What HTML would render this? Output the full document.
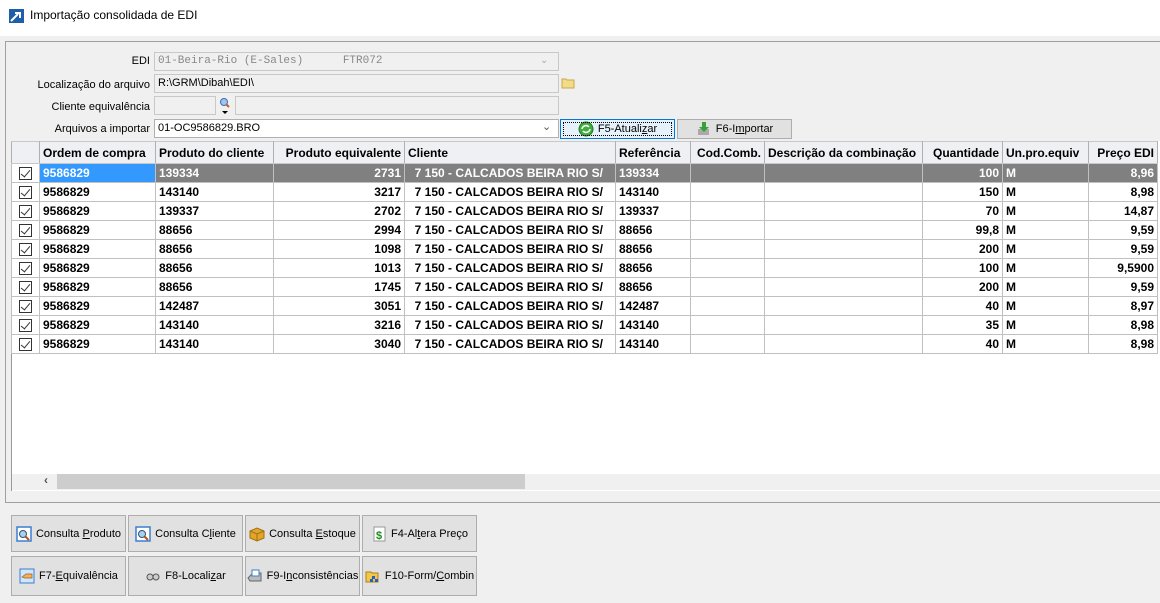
<!DOCTYPE html>
<html><head><meta charset="utf-8"><style>
*{box-sizing:border-box;margin:0;padding:0}
body{width:1160px;height:603px;background:#f0f0f0;font-family:"Liberation Sans",Tahoma,sans-serif;font-size:12px;color:#000;position:relative;overflow:hidden}
.abs{position:absolute}
.title{left:0;top:0;width:1160px;height:36px;background:#fff}
.lbl{text-align:right;width:150px;left:0;font-size:11px}
.fld{border:1px solid #c8c8c8;background:#f0f0f0;height:19px;font-size:11px;padding:2px 3px;white-space:pre}
table{border-collapse:collapse;table-layout:fixed;position:absolute;left:11px;top:141px;width:1146px}
td,th{height:19px;border:1px solid #c0c0c0;font-weight:bold;font-size:12px;padding:0 3px;white-space:nowrap;overflow:hidden}
th{height:22px;background:#eef0f3;text-align:left;border-color:#c8c8c8 #b0b0b0}
.r{text-align:right}
tr.sel td{background:#808080;color:#fff}
tr.sel td.h{background:#3399ff}
td.cb{background:#fff!important;padding:0;text-align:center}
.box{display:inline-block;width:13px;height:13px;border:1px solid #333;vertical-align:middle;position:relative;background:#fff}
.box:after{content:"";position:absolute;left:3px;top:0px;width:4px;height:8px;border:solid #333;border-width:0 1.5px 1.5px 0;transform:rotate(40deg)}
.btn{background:#e1e1e1;border:1px solid #adadad;font-size:11px;display:flex;align-items:center;justify-content:center;white-space:nowrap}
.btn svg{margin-right:4px}
.ic{display:inline-block;width:16px;height:16px}
</style></head><body>
<div class="abs title"></div>
<svg class="abs" style="left:9px;top:9px" width="15" height="14"><rect width="15" height="14" fill="#1d5fa8"/><path d="M2 12 L9 5 M6 4 H11 V9" stroke="#fff" stroke-width="2" fill="none"/></svg>
<div class="abs" style="left:30px;top:8px;font-size:12px">Importação consolidada de EDI</div>
<div class="abs" style="left:5px;top:41px;width:1160px;height:462px;border:1px solid #a0a0a0;border-right:none"></div>

<div class="abs lbl" style="top:55px">EDI</div>
<div class="abs fld" style="left:154px;top:52px;width:405px;font-family:'Liberation Mono',monospace;color:#888;font-size:11px">01-Beira-Rio (E-Sales)      FTR072</div>
<div class="abs" style="left:540px;top:55px;color:#aaa;font-size:10px">&#8964;</div>
<div class="abs lbl" style="top:79px">Localização do arquivo</div>
<div class="abs fld" style="left:154px;top:74px;width:405px">R:\GRM\Dibah\EDI\</div>
<svg class="abs" style="left:561px;top:76px" width="14" height="13"><path d="M1 3 H5 L6 4 H13 V12 H1Z" fill="#f2dc8a" stroke="#c9a94a"/></svg>
<div class="abs lbl" style="top:101px">Cliente equivalência</div>
<div class="abs fld" style="left:154px;top:96px;width:62px"></div>
<svg class="abs" style="left:219px;top:97px" width="12" height="18"><circle cx="5" cy="5" r="3.5" fill="#9cc8f0" stroke="#3a6fb0"/><path d="M7 7 L10 10" stroke="#c06030" stroke-width="2"/><path d="M3 14 H9 L6 17Z" fill="#000"/></svg>
<div class="abs fld" style="left:235px;top:96px;width:324px"></div>
<div class="abs lbl" style="top:123px">Arquivos a importar</div>
<div class="abs fld" style="left:154px;top:119px;width:405px;background:#fff;border-color:#b0b0b0">01-OC9586829.BRO</div>
<div class="abs" style="left:542px;top:120px;color:#555;font-size:11px">&#8964;</div>
<div class="abs btn" style="left:560px;top:119px;width:115px;height:20px;border:1px solid #0078d7;background:#e5f1fb;outline:1px dotted #000;outline-offset:-4px"><svg class="ic" viewBox="0 0 16 16"><circle cx="8" cy="8" r="7" fill="#3fae3f" stroke="#1e7a1e"/><path d="M4 8a4 4 0 0 1 7-2M12 8a4 4 0 0 1-7 2" stroke="#fff" stroke-width="1.5" fill="none"/></svg><span>F5-Atuali<u>z</u>ar</span></div>
<div class="abs btn" style="left:677px;top:119px;width:115px;height:20px"><svg class="ic" viewBox="0 0 16 16"><rect x="2" y="8" width="11" height="6" fill="#aaa"/><path d="M6 1 H10 V6 H13 L8 11 L3 6 H6Z" fill="#3aa13a"/></svg><span>F6-I<u>m</u>portar</span></div>

<div class="abs" style="left:11px;top:141px;width:1149px;height:350px;background:#fff;border-left:1px solid #999"></div>
<table>
<colgroup><col style="width:28px"><col style="width:116px"><col style="width:118px"><col style="width:131px"><col style="width:211px"><col style="width:75px"><col style="width:74px"><col style="width:158px"><col style="width:80px"><col style="width:86px"><col style="width:69px"></colgroup>
<tr><th></th><th>Ordem de compra</th><th>Produto do cliente</th><th class="r">Produto equivalente</th><th>Cliente</th><th>Referência</th><th class="r">Cod.Comb.</th><th>Descrição da combinação</th><th class="r">Quantidade</th><th>Un.pro.equiv</th><th class="r">Preço EDI</th></tr>
<tr class="sel"><td class="cb"><span class="box"></span></td><td class="h">9586829</td><td>139334</td><td class="r">2731</td><td>&nbsp;&nbsp;7 150 - CALCADOS BEIRA RIO S/</td><td>139334</td><td></td><td></td><td class="r">100</td><td>M</td><td class="r">8,96</td></tr>
<tr><td class="cb"><span class="box"></span></td><td>9586829</td><td>143140</td><td class="r">3217</td><td>&nbsp;&nbsp;7 150 - CALCADOS BEIRA RIO S/</td><td>143140</td><td></td><td></td><td class="r">150</td><td>M</td><td class="r">8,98</td></tr>
<tr><td class="cb"><span class="box"></span></td><td>9586829</td><td>139337</td><td class="r">2702</td><td>&nbsp;&nbsp;7 150 - CALCADOS BEIRA RIO S/</td><td>139337</td><td></td><td></td><td class="r">70</td><td>M</td><td class="r">14,87</td></tr>
<tr><td class="cb"><span class="box"></span></td><td>9586829</td><td>88656</td><td class="r">2994</td><td>&nbsp;&nbsp;7 150 - CALCADOS BEIRA RIO S/</td><td>88656</td><td></td><td></td><td class="r">99,8</td><td>M</td><td class="r">9,59</td></tr>
<tr><td class="cb"><span class="box"></span></td><td>9586829</td><td>88656</td><td class="r">1098</td><td>&nbsp;&nbsp;7 150 - CALCADOS BEIRA RIO S/</td><td>88656</td><td></td><td></td><td class="r">200</td><td>M</td><td class="r">9,59</td></tr>
<tr><td class="cb"><span class="box"></span></td><td>9586829</td><td>88656</td><td class="r">1013</td><td>&nbsp;&nbsp;7 150 - CALCADOS BEIRA RIO S/</td><td>88656</td><td></td><td></td><td class="r">100</td><td>M</td><td class="r">9,5900</td></tr>
<tr><td class="cb"><span class="box"></span></td><td>9586829</td><td>88656</td><td class="r">1745</td><td>&nbsp;&nbsp;7 150 - CALCADOS BEIRA RIO S/</td><td>88656</td><td></td><td></td><td class="r">200</td><td>M</td><td class="r">9,59</td></tr>
<tr><td class="cb"><span class="box"></span></td><td>9586829</td><td>142487</td><td class="r">3051</td><td>&nbsp;&nbsp;7 150 - CALCADOS BEIRA RIO S/</td><td>142487</td><td></td><td></td><td class="r">40</td><td>M</td><td class="r">8,97</td></tr>
<tr><td class="cb"><span class="box"></span></td><td>9586829</td><td>143140</td><td class="r">3216</td><td>&nbsp;&nbsp;7 150 - CALCADOS BEIRA RIO S/</td><td>143140</td><td></td><td></td><td class="r">35</td><td>M</td><td class="r">8,98</td></tr>
<tr><td class="cb"><span class="box"></span></td><td>9586829</td><td>143140</td><td class="r">3040</td><td>&nbsp;&nbsp;7 150 - CALCADOS BEIRA RIO S/</td><td>143140</td><td></td><td></td><td class="r">40</td><td>M</td><td class="r">8,98</td></tr>
</table>
<div class="abs" style="left:12px;top:474px;width:1148px;height:16px;background:#f0f0f0"></div>
<div class="abs" style="left:57px;top:474px;width:468px;height:15px;background:#cdcdcd"></div>
<div class="abs" style="left:44px;top:473px;font-size:12px;font-weight:bold;color:#555">&lsaquo;</div>

<div class="abs btn" style="left:11px;top:515px;width:115px;height:37px"><svg class="ic" viewBox="0 0 16 16"><rect x="1" y="1" width="14" height="14" fill="#fff" stroke="#3b7fd0" stroke-width="1.5"/><circle cx="7" cy="8" r="3.5" fill="#a8d0f5" stroke="#356"/><path d="M9.5 10.5 L13 14" stroke="#c05020" stroke-width="2"/></svg><span>Consulta <u>P</u>roduto</span></div>
<div class="abs btn" style="left:128px;top:515px;width:115px;height:37px"><svg class="ic" viewBox="0 0 16 16"><rect x="1" y="1" width="14" height="14" fill="#fff" stroke="#3b7fd0" stroke-width="1.5"/><circle cx="7" cy="8" r="3.5" fill="#a8d0f5" stroke="#356"/><path d="M9.5 10.5 L13 14" stroke="#c05020" stroke-width="2"/></svg><span>Consulta C<u>l</u>iente</span></div>
<div class="abs btn" style="left:245px;top:515px;width:115px;height:37px"><svg class="ic" viewBox="0 0 16 16"><path d="M1 5 L8 2 L15 5 V12 L8 15 L1 12Z" fill="#e0a52a" stroke="#a57010"/><path d="M1 5 L8 8 L15 5 M8 8 V15" stroke="#a57010" fill="none"/></svg><span>Consulta <u>E</u>stoque</span></div>
<div class="abs btn" style="left:362px;top:515px;width:115px;height:37px"><svg class="ic" viewBox="0 0 16 16"><rect x="3" y="1" width="11" height="14" fill="#fff" stroke="#999"/><text x="5" y="13" font-size="11" font-weight="bold" fill="#1a8a1a" font-family="Liberation Sans">$</text></svg><span>F4-Al<u>t</u>era Preço</span></div>
<div class="abs btn" style="left:11px;top:556px;width:115px;height:40px"><svg class="ic" viewBox="0 0 16 16"><rect x="1" y="1" width="14" height="14" fill="#cfe6fb" stroke="#3b7fd0"/><path d="M3 9 L7 6 H13 V10 H6Z" fill="#f0b060" stroke="#a06020" stroke-width=".7"/></svg><span>F7-<u>E</u>quivalência</span></div>
<div class="abs btn" style="left:128px;top:556px;width:115px;height:40px"><svg class="ic" viewBox="0 0 16 16"><circle cx="5" cy="9" r="3" fill="#ccc" stroke="#555"/><circle cx="11" cy="9" r="3" fill="#ccc" stroke="#555"/></svg><span>F8-Locali<u>z</u>ar</span></div>
<div class="abs btn" style="left:245px;top:556px;width:115px;height:40px"><svg class="ic" viewBox="0 0 16 16"><path d="M1 10 L6 5 H14 V13 H3Z" fill="#bbb" stroke="#666"/><rect x="5" y="2" width="7" height="6" fill="#fff" stroke="#3b7fd0"/></svg><span>F9-I<u>n</u>consistências</span></div>
<div class="abs btn" style="left:362px;top:556px;width:115px;height:40px"><svg class="ic" viewBox="0 0 16 16"><path d="M1 4 H6 L7 5 H13 V14 H1Z" fill="#f2c84a" stroke="#b08010"/><rect x="7" y="8" width="3" height="3" fill="#2a5fc0"/><rect x="10" y="11" width="3" height="3" fill="#2a5fc0"/><rect x="5" y="11" width="3" height="3" fill="#2a5fc0"/></svg><span>F10-Form/<u>C</u>ombin</span></div>
</body></html>
